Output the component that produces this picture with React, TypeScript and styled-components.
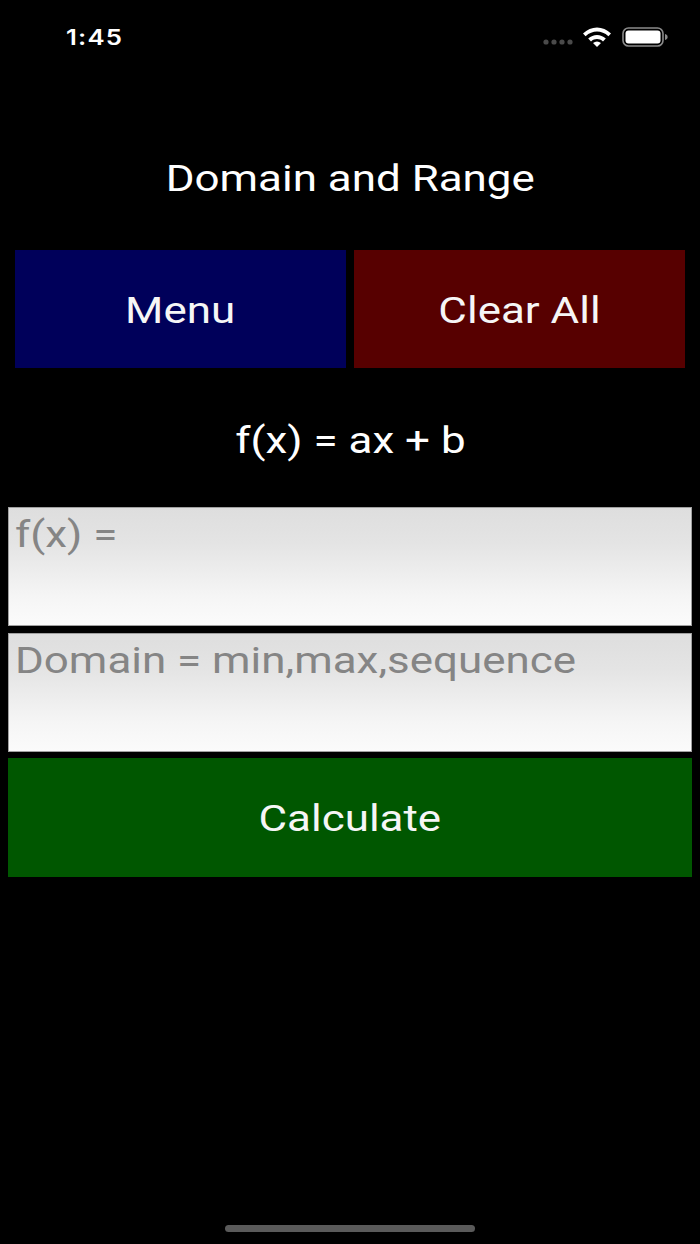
import React from "react";
import styled, { createGlobalStyle } from "styled-components";

const Global = createGlobalStyle`
  html, body { margin: 0; padding: 0; background: #000; }
  * { box-sizing: border-box; }
`;

const Screen = styled.div`
  position: relative;
  width: 700px;
  height: 1244px;
  background: #000;
  color: #fff;
  font-family: Roboto, "Open Sans", sans-serif;
  display: flex;
  flex-direction: column;
`;

const StatusBar = styled.div`
  height: 72px;
  display: flex;
  align-items: flex-start;
  justify-content: space-between;
  padding: 24px 32px 0 66px;
`;

const Clock = styled.span`
  display: inline-block;
  font-family: "Inter", "Liberation Sans", sans-serif;
  font-size: 22px;
  line-height: 26px;
  font-weight: 600;
  letter-spacing: 1px;
  transform: scaleX(1.17);
  transform-origin: left center;
`;

const StatusIcons = styled.div`
  display: flex;
  align-items: center;
  gap: 10px;
  height: 26px;
`;

const Dots = styled.svg`
  margin-top: 10px;
  margin-right: -2px;
`;

/* The reference text is Roboto stretched sideways, so labels are stretched as a whole. */
const Wide = styled.span`
  display: inline-block;
  white-space: nowrap;
  transform: scaleX(1.22);
  transform-origin: center;
`;

const WideLeft = styled(Wide)`
  transform-origin: left center;
`;

const Title = styled.h1`
  margin: 0;
  height: 178px;
  padding-top: 85px;
  text-align: center;
  font-size: 36px;
  line-height: 44px;
  font-weight: 400;
`;

const TopRow = styled.div`
  display: grid;
  grid-template-columns: 331px 331px;
  gap: 8px;
  padding: 0 15px;
`;

const ActionButton = styled.button<{ $bg: string }>`
  height: 118px;
  border: 0;
  padding: 4px 0 0;
  background: ${(p) => p.$bg};
  color: #f6f6f6;
  font-family: inherit;
  font-size: 36px;
  font-weight: 400;
`;

const Formula = styled.div`
  height: 139px;
  padding-top: 6px;
  display: flex;
  align-items: center;
  justify-content: center;
  font-size: 36px;
`;

const Form = styled.div`
  display: flex;
  flex-direction: column;
  gap: 7px;
  padding: 0 8px;
`;

const Field = styled.div`
  height: 119px;
  padding: 5px 6px;
  border: 1px solid #a0a0a0;
  background: linear-gradient(#dedede 0%, #e4e4e4 30%, #f5f5f5 75%, #fbfbfb 100%);
  color: #858585;
  font-size: 36px;
  line-height: 44px;
`;

const CalcButton = styled(ActionButton)`
  width: 100%;
  height: 119px;
  margin-top: -1px;
  padding-top: 2px;
`;

const HomeBar = styled.div`
  position: absolute;
  left: 225px;
  bottom: 12px;
  width: 250px;
  height: 7px;
  border-radius: 4px;
  background: #5a5a5a;
`;

export default function App() {
  return (
    <Screen>
      <Global />
      <StatusBar>
        <Clock>1:45</Clock>
        <StatusIcons>
          <Dots width="31" height="10" viewBox="0 0 31 10">
            {[3, 11, 19, 27].map((x) => (
              <circle key={x} cx={x} cy="5" r="2.6" fill="#4a4a4a" />
            ))}
          </Dots>
          <svg width="30" height="20" viewBox="0 0 30 20">
            <path d="M1 6.5 C9 -1.5 21 -1.5 29 6.5 L26.4 9.2 C19.5 3 10.5 3 3.6 9.2 Z" fill="#fff" />
            <path d="M6.2 11.6 C11.5 6.8 18.5 6.8 23.8 11.6 L21 14.4 C17.2 11.2 12.8 11.2 9 14.4 Z" fill="#fff" />
            <path d="M11 16 C13.5 14 16.5 14 19 16 L15 20 Z" fill="#fff" />
          </svg>
          <svg width="46" height="20" viewBox="0 0 46 20">
            <rect x="1" y="1" width="40" height="18" rx="5.5" fill="none" stroke="#8a8a8a" strokeWidth="1.6" />
            <rect x="3.5" y="3.5" width="35" height="13" rx="3" fill="#fff" />
            <path d="M43 7 C45 7.6 45.6 8.8 45.6 10 C45.6 11.2 45 12.4 43 13 Z" fill="#8a8a8a" />
          </svg>
        </StatusIcons>
      </StatusBar>
      <Title><Wide>Domain and Range</Wide></Title>
      <TopRow>
        <ActionButton $bg="#00005a"><Wide>Menu</Wide></ActionButton>
        <ActionButton $bg="#570000"><Wide>Clear All</Wide></ActionButton>
      </TopRow>
      <Formula><Wide>f(x) = ax + b</Wide></Formula>
      <Form>
        <Field><WideLeft>f(x) =</WideLeft></Field>
        <Field><WideLeft>Domain = min,max,sequence</WideLeft></Field>
        <CalcButton $bg="#005700"><Wide>Calculate</Wide></CalcButton>
      </Form>
      <HomeBar />
    </Screen>
  );
}
